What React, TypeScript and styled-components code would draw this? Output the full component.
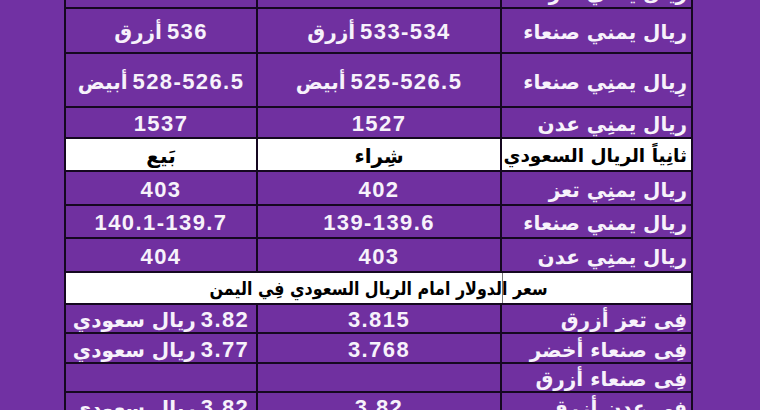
import React from "react"

import styled, { createGlobalStyle } from "styled-components"

type Kind = "label" | "value" | "head" | "headLabel"

type Row = {
  height: number
  cells?: [string, string, string]
  title?: string
  head?: boolean
}

const rows: Row[] = [
  { height: 31, cells: ["ريال يمني تعز", "1527", "1537"] },
  { height: 43, cells: ["ريال يمني صنعاء", "533-534 أزرق", "536 أزرق"] },
  { height: 52, cells: ["رِيال يمنِي صنعاء", "525-526.5 أبيض", "528-526.5 أبيض"] },
  { height: 29, cells: ["ريال يمنِي عدن", "1527", "1537"] },
  { height: 31, cells: ["ثانِياً الريال السعودي", "شِراء", "بَيع"], head: true },
  { height: 32, cells: ["ريال يمنِي تعز", "402", "403"] },
  { height: 31, cells: ["ريال يمني صنعاء", "139-139.6", "140.1-139.7"] },
  { height: 32, cells: ["ريال يمنِي عدن", "403", "404"] },
  { height: 30, title: "سعر الدولار امام الريال السعودي فِي اليمن" },
  { height: 27, cells: ["فِى تعز أزرق", "3.815", "3.82 ريال سعودي"] },
  { height: 28, cells: ["فِى صنعاء أخضر", "3.768", "3.77 ريال سعودي"] },
  { height: 27, cells: ["فِى صنعاء أزرق", "", ""] },
  { height: 27, cells: ["فِى عدن أزرق", "3.82", "3.82 ريال سعودي"] },
]

// numbers in a latin face, arabic words in DejaVu
function Content({ text, compact = false }: { text: string; compact?: boolean }) {
  const parts = text.split(/([0-9][0-9.\-]*)/).filter((p) => p.trim() !== "")
  return (
    <Line>
      {parts.map((part, i) =>
        /^[0-9]/.test(part) ? (
          <Num key={i}>{part}</Num>
        ) : (
          <Word key={i} $compact={compact}>
            {part.trim()}
          </Word>
        ),
      )}
    </Line>
  )
}

export default function App() {
  const template = rows.map((r) => `${r.height}px`).join(" ")

  return (
    <>
      <GlobalStyle />
      <Page>
        <Table $rows={template}>
          {rows.map((row, i) =>
            row.title ? (
              <TitleCell key={i}>
                <Content text={row.title} compact />
              </TitleCell>
            ) : (
              row.cells!.map((value, j) => {
                const kind: Kind = row.head
                  ? j === 0
                    ? "headLabel"
                    : "head"
                  : j === 0
                    ? "label"
                    : "value"
                return (
                  <Cell key={`${i}-${j}`} $kind={kind}>
                    <Content text={value} compact={kind === "headLabel"} />
                  </Cell>
                )
              })
            ),
          )}
        </Table>
      </Page>
    </>
  )
}

const GlobalStyle = createGlobalStyle`
  html, body {
    margin: 0;
    padding: 0;
    background: #7030a0;
    overflow: hidden;
  }
  body {
    font-family: "Liberation Sans", "DejaVu Sans", sans-serif;
  }
`

const Page = styled.div`
  width: 760px;
  height: 410px;
  overflow: hidden;
  background: #7131a3;
`

const Table = styled.div<{ $rows: string }>`
  direction: rtl;
  display: grid;
  grid-template-columns: 189px 242px 190px;
  grid-template-rows: ${(p) => p.$rows};
  gap: 2px;
  padding: 2px;
  width: max-content;
  margin: -26px 0 0 64px;
  background: #150820;
`

const Cell = styled.div<{ $kind: Kind }>`
  display: flex;
  align-items: center;
  justify-content: ${(p) =>
    p.$kind === "label" || p.$kind === "headLabel" ? "flex-start" : "center"};
  padding: 3px 4px 0 4px;
  white-space: nowrap;
  overflow: hidden;
  background: ${(p) =>
    p.$kind === "head" || p.$kind === "headLabel" ? "#ffffff" : "#7030a0"};
  color: ${(p) =>
    p.$kind === "head" || p.$kind === "headLabel" ? "#000000" : "#f7f2fb"};
  font-weight: 700;
`

const Line = styled.span`
  display: inline-flex;
  align-items: baseline;
  gap: 5px;
  line-height: 1;
`

const TitleCell = styled.div`
  grid-column: 1 / -1;
  display: flex;
  align-items: center;
  justify-content: center;
  padding-top: 3px;
  background: linear-gradient(
    to right,
    #ffffff 436px,
    #777777 436px,
    #777777 437px,
    #ffffff 437px
  );
  color: #000;
  font-weight: 700;
  white-space: nowrap;

  ${Line} {
    transform: scaleX(0.86);
  }
`

const Num = styled.span`
  font-family: "Liberation Sans", Arial, sans-serif;
  font-size: 22px;
  letter-spacing: 1.4px;
  direction: ltr;
`

const Word = styled.span<{ $compact: boolean }>`
  font-family: "DejaVu Sans", sans-serif;
  font-size: ${(p) => (p.$compact ? "18.5px" : "20px")};
`
